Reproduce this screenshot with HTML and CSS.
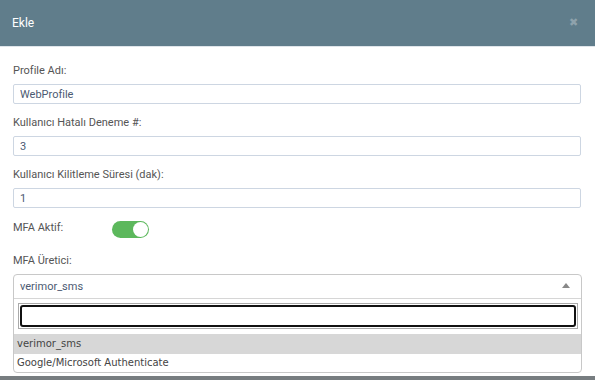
FILE: index.html
```html
<!DOCTYPE html>
<html lang="tr">

<head>
  <meta charset="UTF-8">
  <title>Ekle</title>
  <link rel="stylesheet" href="styles.css">
</head>

<body>
  <div class="modal">
    <div class="modal-header">
      <span class="modal-title">Ekle</span>
      <span class="close">&#10006;</span>
    </div>

    <div class="modal-body">
      <div class="field">
        <label>Profile Adı:</label>
        <input type="text" value="WebProfile" />
      </div>

      <div class="field">
        <label>Kullanıcı Hatalı Deneme #:</label>
        <input type="text" value="3" />
      </div>

      <div class="field">
        <label>Kullanıcı Kilitleme Süresi (dak):</label>
        <input type="text" value="1" />
      </div>

      <div class="field-inline">
        <label>MFA Aktif:</label>
        <div class="toggle">
          <div class="knob"></div>
        </div>
      </div>

      <div class="field">
        <label>MFA Üretici:</label>
        <div class="select-box">
          <div class="select-current">
            <span>verimor_sms</span>
            <span class="arrow"></span>
          </div>
          <div class="dropdown">
            <div class="search-wrap">
              <div class="search"></div>
            </div>
            <div class="option selected">verimor_sms</div>
            <div class="option">Google/Microsoft Authenticate</div>
          </div>
        </div>
      </div>
    </div>
  </div>
  <div class="footer-bar"></div>
</body>

</html>
```

FILE: styles.css
```css
body {
  margin: 0;
  width: 595px;
  height: 380px;
  overflow: hidden;
  background: #ffffff;
  font-family: 'Roboto', 'Liberation Sans', sans-serif;
  color: #555;
}

.modal {
  height: 376px;
  display: flex;
  flex-direction: column;
}

.modal-header {
  flex-shrink: 0;
  height: 47px;
  background-color: #607d8b;
  border-bottom: 1px solid #dfe5ea;
  display: flex;
  align-items: center;
  justify-content: space-between;
  padding: 0 12px;
  box-sizing: border-box;
}

.modal-title {
  color: #ffffff;
  font-size: 12px;
  font-weight: normal;
  margin-top: -1px;
}

.close {
  color: #8ea2ac;
  font-size: 11px;
  margin-right: 5px;
  margin-top: -2px;
}

.modal-body {
  padding: 17px 14px 0 13px;
}

.field {
  display: flex;
  flex-direction: column;
}

label {
  font-size: 11px;
  color: #555;
  line-height: 14px;
  margin-bottom: 6px;
}

input[type="text"] {
  height: 20px;
  box-sizing: border-box;
  border: 1px solid #cdd6e2;
  border-radius: 2px;
  padding: 0 6px;
  font-family: 'Roboto', 'Liberation Sans', sans-serif;
  font-size: 11px;
  color: #4c5a72;
  margin-bottom: 12px;
  outline: none;
}

.field-inline {
  display: flex;
  align-items: center;
  margin-top: 1px;
  margin-bottom: 16px;
}

.field-inline label {
  margin: -4px 0 0 0;
  width: 99px;
}

.toggle {
  width: 37px;
  height: 17px;
  border-radius: 9px;
  background-color: #5cb85c;
  display: flex;
  align-items: center;
  justify-content: flex-end;
  padding: 0 1px;
  box-sizing: border-box;
}

.knob {
  width: 15px;
  height: 15px;
  border-radius: 50%;
  background: #ffffff;
}

.select-box {
  border: 1px solid #c8c8c8;
  border-radius: 4px;
  margin-right: -1px;
}

.select-current {
  height: 23px;
  display: flex;
  align-items: center;
  justify-content: space-between;
  padding: 0 11px 0 6px;
  font-size: 11px;
  color: #4c5a72;
  border-bottom: 1px solid #d6d6d6;
}

.arrow {
  width: 0;
  height: 0;
  border-left: 4px solid transparent;
  border-right: 4px solid transparent;
  border-bottom: 5px solid #888;
  margin-top: -2px;
}

.dropdown {
  font-family: 'DejaVu Sans', Verdana, sans-serif;
  font-size: 10px;
  color: #444;
}

.search-wrap {
  padding: 4px 3px 5px 4px;
}

.search {
  height: 22px;
  border: 1px solid #aaa;
  padding: 1px;
}

.search::before {
  content: "";
  display: block;
  height: 18px;
  border: 2px solid #111;
  border-radius: 3px;
}

.option {
  height: 20px;
  line-height: 20px;
  padding-left: 3px;
}

.option + .option {
  height: 18px;
  line-height: 18px;
}

.option.selected {
  background-color: #d7d7d7;
}

.footer-bar {
  height: 4px;
  background: #777d80;
}
```
